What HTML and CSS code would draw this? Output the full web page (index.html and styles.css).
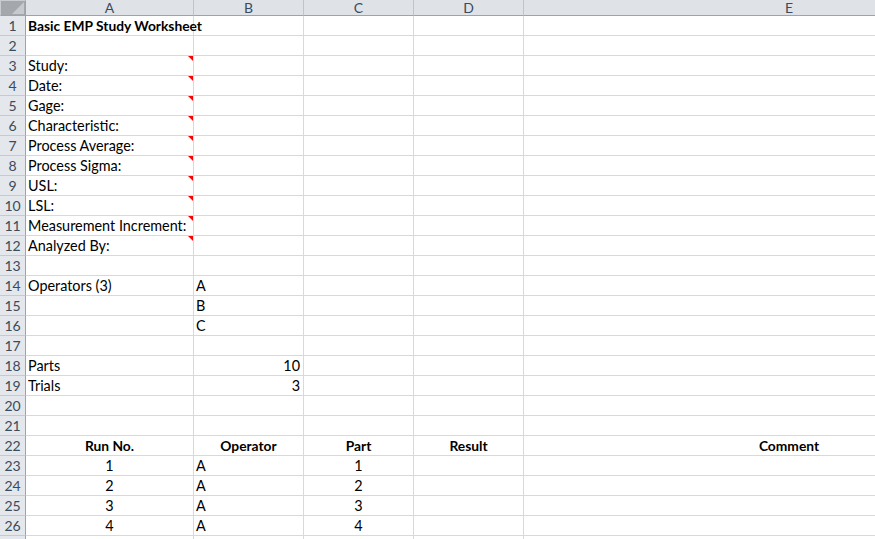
FILE: index.html
```html
<!DOCTYPE html>
<html>
<head>
<meta charset="utf-8">
<link rel="stylesheet" href="styles.css">
</head>
<body>
<div class="sheet">
  <div class="row head">
    <div class="rh corner"><span class="tri"></span></div>
    <div class="ch ca">A</div><div class="ch cb">B</div><div class="ch cc">C</div><div class="ch cd">D</div><div class="ch ce">E</div>
  </div>
  <div class="row"><div class="rh">1</div><div class="c ca b">Basic EMP Study Worksheet</div><div class="c cb"></div><div class="c cc"></div><div class="c cd"></div><div class="c ce"></div></div>
  <div class="row"><div class="rh">2</div><div class="c ca"></div><div class="c cb"></div><div class="c cc"></div><div class="c cd"></div><div class="c ce"></div></div>
  <div class="row"><div class="rh">3</div><div class="c ca note">Study:</div><div class="c cb"></div><div class="c cc"></div><div class="c cd"></div><div class="c ce"></div></div>
  <div class="row"><div class="rh">4</div><div class="c ca note">Date:</div><div class="c cb"></div><div class="c cc"></div><div class="c cd"></div><div class="c ce"></div></div>
  <div class="row"><div class="rh">5</div><div class="c ca note">Gage:</div><div class="c cb"></div><div class="c cc"></div><div class="c cd"></div><div class="c ce"></div></div>
  <div class="row"><div class="rh">6</div><div class="c ca note">Characteristic:</div><div class="c cb"></div><div class="c cc"></div><div class="c cd"></div><div class="c ce"></div></div>
  <div class="row"><div class="rh">7</div><div class="c ca note">Process Average:</div><div class="c cb"></div><div class="c cc"></div><div class="c cd"></div><div class="c ce"></div></div>
  <div class="row"><div class="rh">8</div><div class="c ca note">Process Sigma:</div><div class="c cb"></div><div class="c cc"></div><div class="c cd"></div><div class="c ce"></div></div>
  <div class="row"><div class="rh">9</div><div class="c ca note">USL:</div><div class="c cb"></div><div class="c cc"></div><div class="c cd"></div><div class="c ce"></div></div>
  <div class="row"><div class="rh">10</div><div class="c ca note">LSL:</div><div class="c cb"></div><div class="c cc"></div><div class="c cd"></div><div class="c ce"></div></div>
  <div class="row"><div class="rh">11</div><div class="c ca note">Measurement Increment:</div><div class="c cb"></div><div class="c cc"></div><div class="c cd"></div><div class="c ce"></div></div>
  <div class="row"><div class="rh">12</div><div class="c ca note">Analyzed By:</div><div class="c cb"></div><div class="c cc"></div><div class="c cd"></div><div class="c ce"></div></div>
  <div class="row"><div class="rh">13</div><div class="c ca"></div><div class="c cb"></div><div class="c cc"></div><div class="c cd"></div><div class="c ce"></div></div>
  <div class="row"><div class="rh">14</div><div class="c ca">Operators (3)</div><div class="c cb">A</div><div class="c cc"></div><div class="c cd"></div><div class="c ce"></div></div>
  <div class="row"><div class="rh">15</div><div class="c ca"></div><div class="c cb">B</div><div class="c cc"></div><div class="c cd"></div><div class="c ce"></div></div>
  <div class="row"><div class="rh">16</div><div class="c ca"></div><div class="c cb">C</div><div class="c cc"></div><div class="c cd"></div><div class="c ce"></div></div>
  <div class="row"><div class="rh">17</div><div class="c ca"></div><div class="c cb"></div><div class="c cc"></div><div class="c cd"></div><div class="c ce"></div></div>
  <div class="row"><div class="rh">18</div><div class="c ca">Parts</div><div class="c cb r">10</div><div class="c cc"></div><div class="c cd"></div><div class="c ce"></div></div>
  <div class="row"><div class="rh">19</div><div class="c ca">Trials</div><div class="c cb r">3</div><div class="c cc"></div><div class="c cd"></div><div class="c ce"></div></div>
  <div class="row"><div class="rh">20</div><div class="c ca"></div><div class="c cb"></div><div class="c cc"></div><div class="c cd"></div><div class="c ce"></div></div>
  <div class="row"><div class="rh">21</div><div class="c ca"></div><div class="c cb"></div><div class="c cc"></div><div class="c cd"></div><div class="c ce"></div></div>
  <div class="row"><div class="rh">22</div><div class="c ca b m">Run No.</div><div class="c cb b m">Operator</div><div class="c cc b m">Part</div><div class="c cd b m">Result</div><div class="c ce b m">Comment</div></div>
  <div class="row"><div class="rh">23</div><div class="c ca m">1</div><div class="c cb">A</div><div class="c cc m">1</div><div class="c cd"></div><div class="c ce"></div></div>
  <div class="row"><div class="rh">24</div><div class="c ca m">2</div><div class="c cb">A</div><div class="c cc m">2</div><div class="c cd"></div><div class="c ce"></div></div>
  <div class="row"><div class="rh">25</div><div class="c ca m">3</div><div class="c cb">A</div><div class="c cc m">3</div><div class="c cd"></div><div class="c ce"></div></div>
  <div class="row"><div class="rh">26</div><div class="c ca m">4</div><div class="c cb">A</div><div class="c cc m">4</div><div class="c cd"></div><div class="c ce"></div></div>
  <div class="row"><div class="rh"></div><div class="c ca"></div><div class="c cb"></div><div class="c cc"></div><div class="c cd"></div><div class="c ce"></div></div>
</div>
</body>
</html>
```
FILE: styles.css
```css
html, body {
  margin: 0;
  padding: 0;
  background: #ffffff;
  overflow: hidden;
}
.sheet {
  width: 875px;
  height: 539px;
  overflow: hidden;
  font-family: "Lato", "Open Sans", sans-serif;
  font-size: 14.4px;
  color: #000;
}
.row {
  display: flex;
  height: 20px;
}
.row.head {
  height: 16px;
}
.rh, .ch, .c {
  box-sizing: border-box;
  flex: none;
  height: 100%;
  display: flex;
  align-items: flex-end;
  white-space: nowrap;
}
.rh {
  width: 26px;
  background: #e4e7eb;
  border-right: 1px solid #9ea3a9;
  border-bottom: 1px solid #c6cacf;
  justify-content: center;
  color: #3b4a5c;
  padding-bottom: 1px;
  font-size: 14px;
}
.ch {
  background: #dfe3e8;
  border-right: 1px solid #bfc4ca;
  border-bottom: 1px solid #9ea3a9;
  justify-content: center;
  color: #3b4a5c;
  padding-bottom: 0;
  line-height: 15px;
  font-size: 14px;
}
.corner {
  position: relative;
  background: #a4a7ab;
  border: 1px solid #c9ccd0;
  border-right: 1px solid #9ea3a9;
  border-bottom: 1px solid #9ea3a9;
}
.tri {
  position: absolute;
  right: 1px;
  bottom: 1px;
  width: 0;
  height: 0;
  border-left: 12px solid transparent;
  border-bottom: 12px solid #c6c9cd;
}
.c {
  border-right: 1px solid #d9d9d9;
  border-bottom: 1px solid #d9d9d9;
  padding: 0 2px 1px 2px;
}
.ca { width: 168px; }
.cb { width: 110px; }
.cc { width: 110px; }
.cd { width: 110px; }
.ce { width: 531px; }
.b { font-weight: bold; font-size: 13.8px; }
.m { justify-content: center; }
.r { justify-content: flex-end; padding-right: 3px; }
.note { position: relative; }
.note::after {
  content: "";
  position: absolute;
  top: 0;
  right: 0;
  width: 0;
  height: 0;
  border-left: 5px solid transparent;
  border-top: 5px solid #ff0000;
}
```
